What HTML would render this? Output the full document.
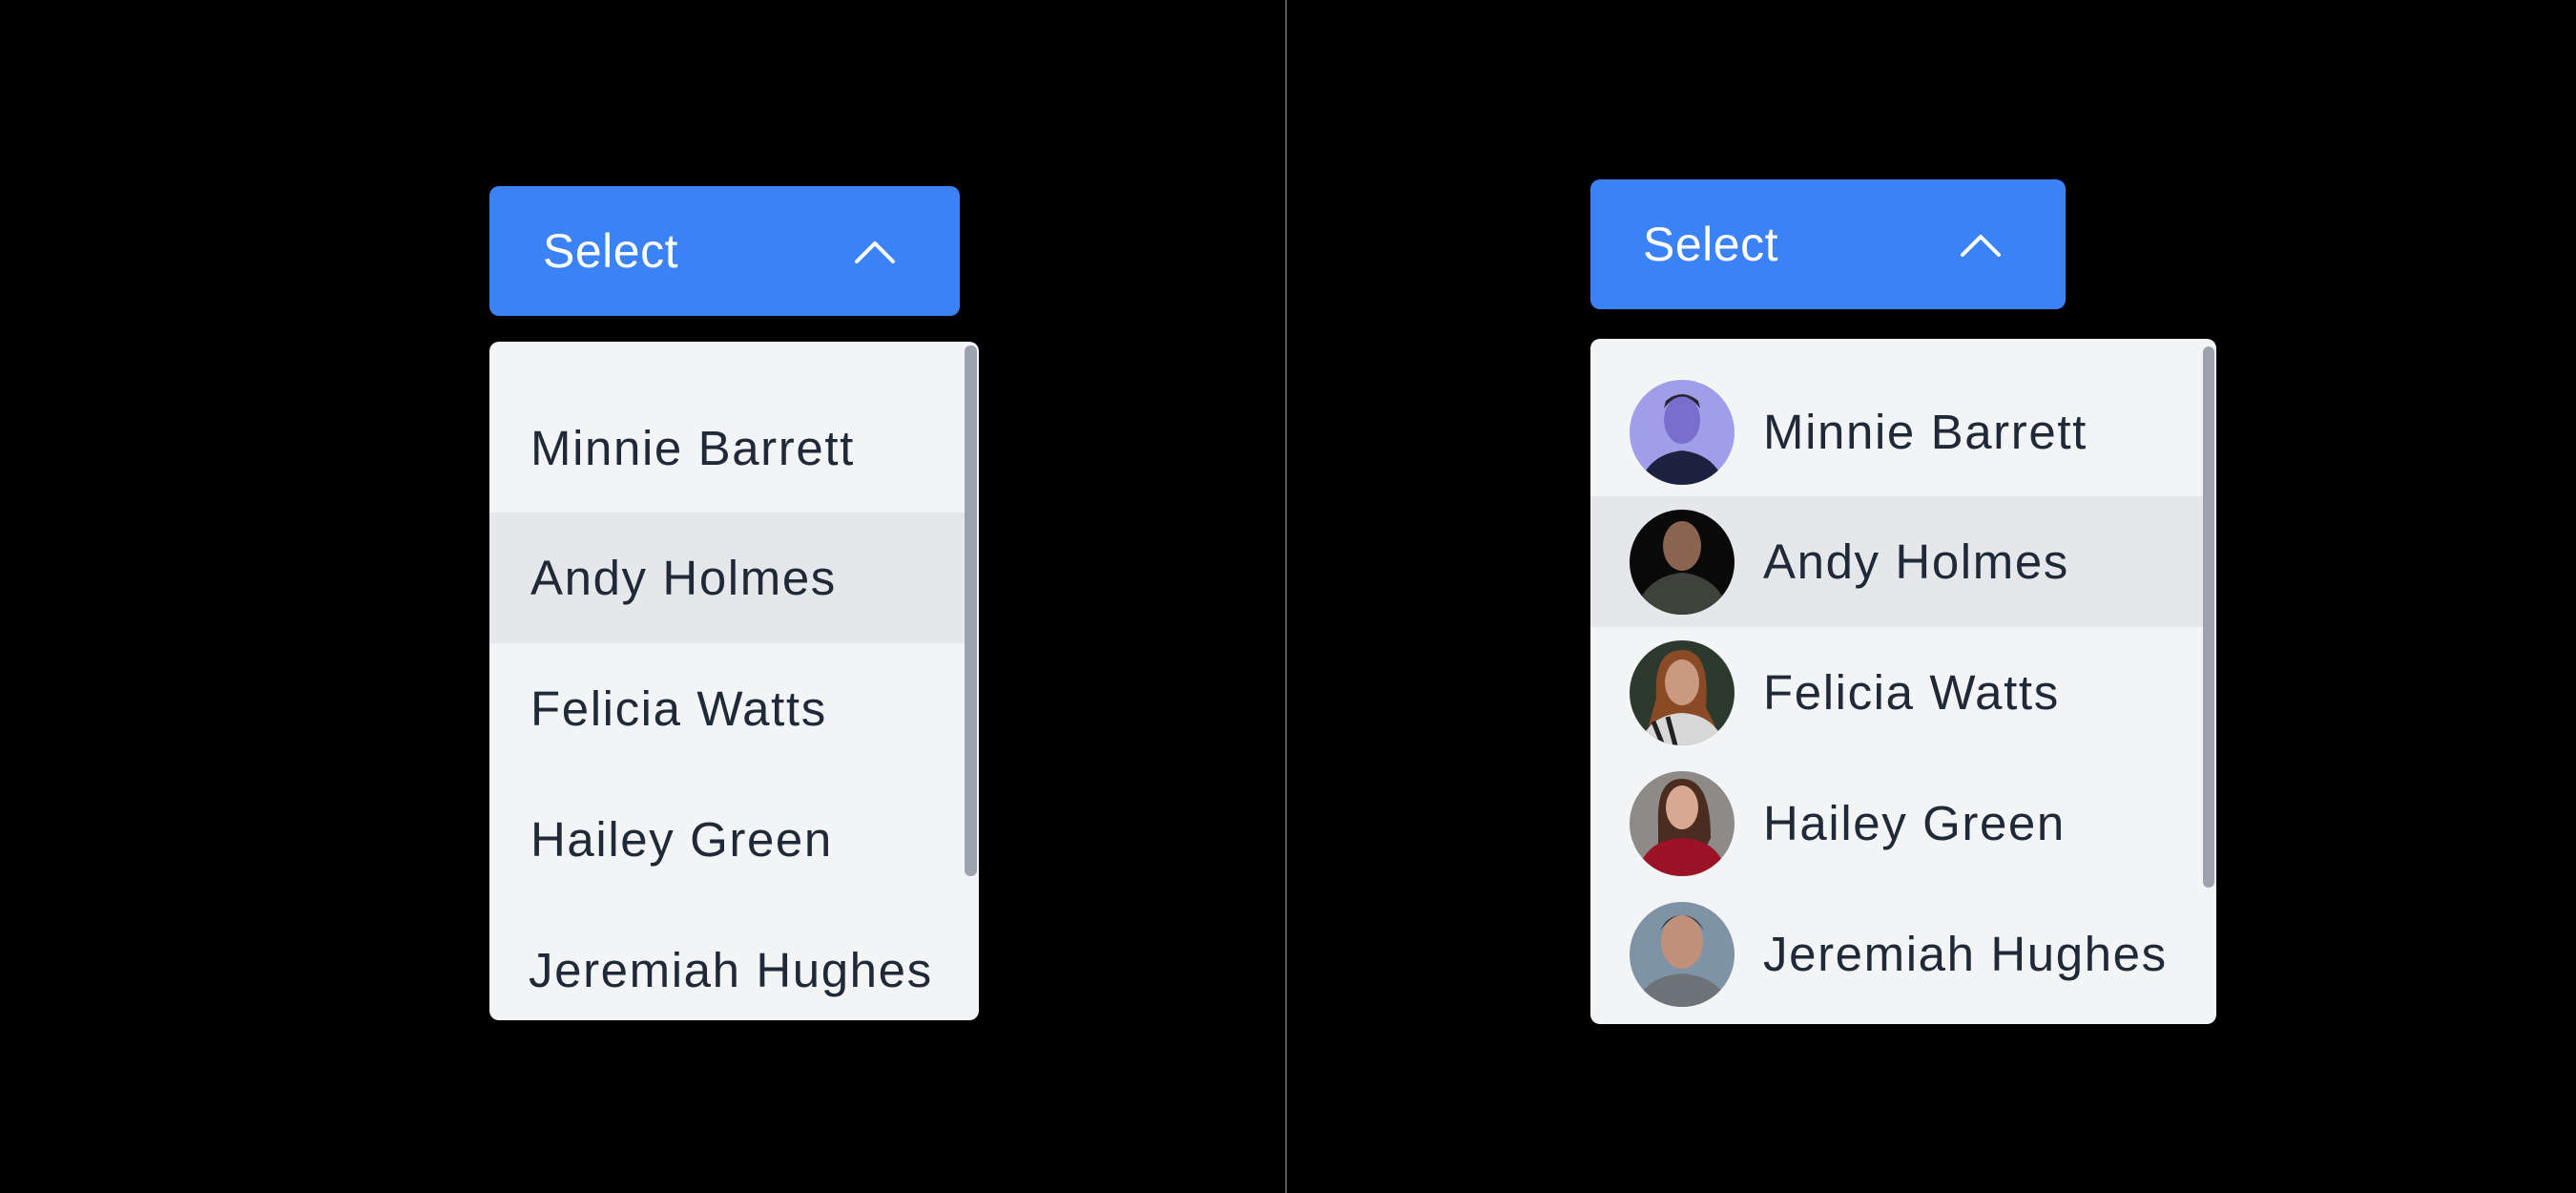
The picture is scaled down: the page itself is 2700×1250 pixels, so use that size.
<!DOCTYPE html>
<html><head><meta charset="utf-8"><style>
*{margin:0;padding:0;box-sizing:border-box}
body{width:2700px;height:1250px;background:#000;position:relative;overflow:hidden;font-family:"Liberation Sans",sans-serif}
.div{position:absolute;left:1347px;top:0;width:2px;height:1250px;background:#555}
.btn{position:absolute;background:#3b82f6;border-radius:10px;color:#fff;font-size:50px;letter-spacing:0.5px}
.btn span{position:absolute;top:50%;transform:translateY(-50%)}
.btn svg{position:absolute}
.dd{position:absolute;background:#f3f4f6;border-radius:10px;overflow:hidden}
.it{position:absolute;left:0;height:137px;font-size:51px;letter-spacing:1.6px;color:#1f2937;display:flex;align-items:center}
.hl{background:#e5e7eb}
.sb{position:absolute;background:#9ca3af;border-radius:6px}
.av{width:110px;height:110px;border-radius:50%;overflow:hidden;margin-left:41px;margin-right:30px;flex:none}
</style></head><body>
<div class="div"></div>

<div class="btn" style="left:513px;top:195px;width:493px;height:136px">
<span style="left:56px">Select</span>
<svg style="left:382px;top:56px" width="44" height="26" viewBox="0 0 44 26"><path d="M3 23 L22 4 L41 23" stroke="#fff" stroke-width="4" fill="none" stroke-linecap="round" stroke-linejoin="round"/></svg>
</div>
<div class="dd" style="left:513px;top:358px;width:513px;height:711px">
<div class="it" style="top:43px;width:498px;padding-left:43px">Minnie Barrett</div>
<div class="it hl" style="top:179px;width:498px;padding-left:43px">Andy Holmes</div>
<div class="it" style="top:316px;width:498px;padding-left:43px">Felicia Watts</div>
<div class="it" style="top:453px;width:498px;padding-left:43px">Hailey Green</div>
<div class="it" style="top:590px;width:498px;padding-left:41px">Jeremiah Hughes</div>
<div class="sb" style="left:498px;top:4px;width:13px;height:556px"></div>
</div>

<div class="btn" style="left:1667px;top:188px;width:498px;height:136px">
<span style="left:55px">Select</span>
<svg style="left:387px;top:56px" width="44" height="26" viewBox="0 0 44 26"><path d="M3 23 L22 4 L41 23" stroke="#fff" stroke-width="4" fill="none" stroke-linecap="round" stroke-linejoin="round"/></svg>
</div>
<div class="dd" style="left:1667px;top:355px;width:656px;height:718px">
<div class="it" style="top:29px;width:642px">
<svg class="av" viewBox="0 0 110 110"><rect width="110" height="110" fill="#a09ee8"/><ellipse cx="55" cy="42" rx="19" ry="25" fill="#7a6ecc"/><path d="M36 30 Q55 5 74 30 L72 22 Q55 8 38 22Z" fill="#2a2430"/><path d="M10 110 Q20 78 55 74 Q90 78 100 110Z" fill="#1c2340"/></svg>Minnie Barrett</div>
<div class="it hl" style="top:165px;width:642px">
<svg class="av" viewBox="0 0 110 110"><rect width="110" height="110" fill="#0a0a0a"/><ellipse cx="55" cy="38" rx="20" ry="26" fill="#8a6450"/><path d="M5 110 Q15 70 55 66 Q95 70 105 110Z" fill="#3f423a"/></svg>Andy Holmes</div>
<div class="it" style="top:302px;width:642px">
<svg class="av" viewBox="0 0 110 110"><rect width="110" height="110" fill="#2b3a2c"/><path d="M28 60 Q25 10 55 10 Q85 10 80 70 L90 90 L20 90Z" fill="#8a4a26"/><ellipse cx="55" cy="44" rx="18" ry="24" fill="#c99a80"/><path d="M10 110 Q20 78 55 76 Q90 78 100 110Z" fill="#d8d8d8"/><path d="M25 85 L35 110 M40 80 L48 110" stroke="#222" stroke-width="5"/></svg>Felicia Watts</div>
<div class="it" style="top:439px;width:642px">
<svg class="av" viewBox="0 0 110 110"><rect width="110" height="110" fill="#8d8a88"/><path d="M30 55 Q28 8 55 8 Q85 8 85 70 L80 80 L30 80Z" fill="#4a2c20"/><ellipse cx="55" cy="38" rx="17" ry="23" fill="#d9a892"/><path d="M8 110 Q14 72 55 70 Q96 72 102 110Z" fill="#9c1328"/></svg>Hailey Green</div>
<div class="it" style="top:576px;width:642px">
<svg class="av" viewBox="0 0 110 110"><rect width="110" height="110" fill="#7e94a6"/><ellipse cx="55" cy="42" rx="22" ry="28" fill="#c09078"/><path d="M32 30 Q55 -2 78 30 Q70 14 55 14 Q40 14 32 30Z" fill="#1e1a18"/><path d="M5 110 Q15 78 55 75 Q95 78 105 110Z" fill="#6d7378"/></svg>Jeremiah Hughes</div>
<div class="sb" style="left:642px;top:8px;width:12px;height:567px"></div>
</div>
</body></html>
